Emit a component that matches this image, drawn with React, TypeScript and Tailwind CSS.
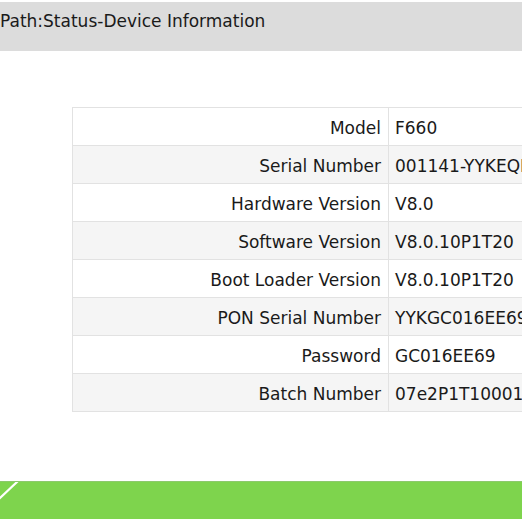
import React from "react";

const rows: [string, string][] = [
  ["Model", "F660"],
  ["Serial Number", "001141-YYKEQD8C16"],
  ["Hardware Version", "V8.0"],
  ["Software Version", "V8.0.10P1T20"],
  ["Boot Loader Version", "V8.0.10P1T20"],
  ["PON Serial Number", "YYKGC016EE69"],
  ["Password", "GC016EE69"],
  ["Batch Number", "07e2P1T1000102"],
];

export default function App() {
  return (
    <div
      className="w-[522px] h-[522px] overflow-hidden bg-white text-[#1a1a1a] flex flex-col"
      style={{ fontFamily: '"DejaVu Sans", Verdana, sans-serif' }}
    >
      <div className="mt-[2px] h-[49px] shrink-0 bg-[#dcdcdc] text-[17px] leading-[39px] whitespace-nowrap">
        Path:Status-Device Information
      </div>
      <div className="mt-[56px] pl-[72px] shrink-0">
        <table className="border-collapse text-[17px]">
          <tbody>
            {rows.map(([k, v], i) => (
              <tr key={k} className={i % 2 === 0 ? "bg-white" : "bg-[#f5f5f5]"}>
                <td className="w-[316px] min-w-[316px] p-0 border border-[#e2e2e2] text-right pr-[7px] whitespace-nowrap leading-[37px]">
                  <span className="relative top-[2px]">{k}</span>
                </td>
                <td className="p-0 border border-[#e2e2e2] pl-[6px] w-[300px] min-w-[300px] whitespace-nowrap leading-[37px]">
                  <span className="relative top-[2px]">{v}</span>
                </td>
              </tr>
            ))}
          </tbody>
        </table>
      </div>
      <div className="mt-[69px] shrink-0 relative h-[38px] bg-[#7ed44d] border-t border-[#8cc96c] overflow-hidden">
        <svg className="absolute left-0 top-0" width="30" height="38" viewBox="0 0 30 38">
          <line x1="-2" y1="18" x2="18" y2="-1" stroke="#ffffff" strokeWidth="2.2" />
        </svg>
      </div>
    </div>
  );
}
